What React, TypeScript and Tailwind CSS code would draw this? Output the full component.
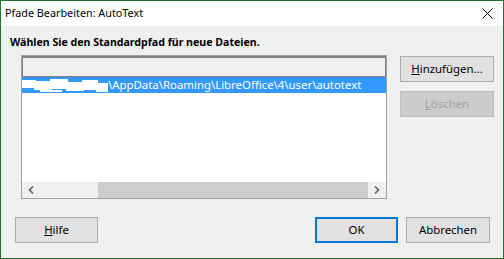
import React from 'react';

const font = { fontFamily: '"Segoe UI", "Noto Sans", "Liberation Sans", sans-serif' };

const Btn = ({ children, className = '' }: { children: React.ReactNode; className?: string }) => (
  <div
    className={`flex h-[26px] items-center justify-center border border-[#adadad] bg-[#e1e1e1] text-[11.4px] text-black ${className}`}
  >
    {children}
  </div>
);

export default function App() {
  return (
    <div style={font} className="flex h-[259px] w-[504px] flex-col border border-[#23702a] bg-[#f0f0f0] text-[11.4px] text-black">
      {/* title bar */}
      <div className="flex h-[25px] shrink-0 items-center justify-between bg-white pl-[4px] pr-[10px]">
        <span className="text-[10.8px] leading-none">Pfade Bearbeiten: AutoText</span>
        <svg width="11" height="11" viewBox="0 0 11 11">
          <path d="M0.5 0.5 L10.5 10.5 M10.5 0.5 L0.5 10.5" stroke="#000" strokeWidth="1" />
        </svg>
      </div>

      <div className="flex flex-1 flex-col">
        <div className="mt-[8px] h-[16px] pl-[9px] text-[10.6px] font-bold leading-[16px]">
          Wählen Sie den Standardpfad für neue Dateien.
        </div>

        <div className="mt-[5px] flex">
          {/* list */}
          <div className="ml-[20px] flex h-[144px] w-[366px] flex-col border border-[#a0a0a0] bg-white">
            <div className="h-[21px] shrink-0 border border-t-2 border-[#828282] bg-[#f0f0f0]" />
            <div className="flex h-[16px] items-center bg-[#3399ff] leading-none text-white">
              <svg width="86" height="15" viewBox="0 0 86 15" className="shrink-0">
                <path d="M0 2 H14 V10 H0 Z M12 3 H30 V12 H12 Z M28 1 H46 V11 H28 Z M44 4 H62 V13 H44 Z M60 2 H76 V12 H60 Z M74 5 H86 V14 H74 Z" fill="#fff" />
                <path d="M18 12 H40 V14 H18 Z" fill="#fff" />
              </svg>
              <span className="whitespace-nowrap">\AppData\Roaming\LibreOffice\4\user\autotext</span>
            </div>
            <div className="flex-1" />
            {/* horizontal scrollbar */}
            <div className="flex h-[16px] shrink-0 items-center bg-[#f0f0f0]">
              <div className="flex w-[17px] items-center justify-center">
                <svg width="6" height="8" viewBox="0 0 6 8">
                  <path d="M5 0.5 L1.5 4 L5 7.5" stroke="#606060" strokeWidth="1.6" fill="none" />
                </svg>
              </div>
              <div className="ml-[59px] h-full w-[270px] bg-[#cdcdcd]" />
              <div className="flex flex-1 items-center justify-center">
                <svg width="6" height="8" viewBox="0 0 6 8">
                  <path d="M1 0.5 L4.5 4 L1 7.5" stroke="#606060" strokeWidth="1.6" fill="none" />
                </svg>
              </div>
            </div>
          </div>

          {/* side buttons */}
          <div className="ml-[13px] flex w-[94px] flex-col gap-[9px] pt-[1px]">
            <Btn>
              <span><span className="underline">H</span>inzufügen...</span>
            </Btn>
            <div className="flex h-[26px] items-center justify-center border border-[#bfbfbf] bg-[#cccccc] text-[11.4px] text-[#a0a0a0]">
              <span><span className="underline">L</span>öschen</span>
            </div>
          </div>
        </div>

        {/* bottom buttons */}
        <div className="mt-[18px] flex items-center">
          <Btn className="ml-[14px] w-[83px]">
            <span><span className="underline">H</span>ilfe</span>
          </Btn>
          <div className="flex-1" />
          <div className="flex h-[26px] w-[83px] items-center justify-center border-2 border-[#0078d7] bg-[#e1e1e1] text-[11.4px]">
            OK
          </div>
          <Btn className="ml-[8px] mr-[13px] w-[84px]">Abbrechen</Btn>
        </div>
      </div>
    </div>
  );
}
